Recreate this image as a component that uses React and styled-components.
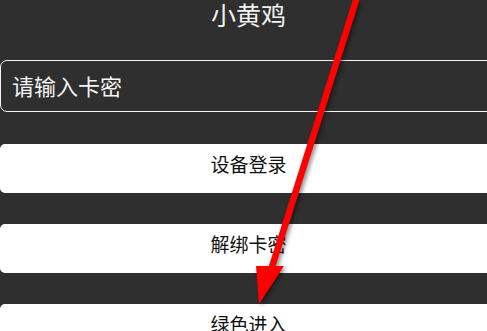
import React from "react";
import styled, { createGlobalStyle } from "styled-components";

const Global = createGlobalStyle`
  html, body {
    margin: 0;
    padding: 0;
    background: #2f2f2f;
    overflow: hidden;
  }
  body {
    font-family: "Noto Sans CJK SC", "Noto Sans", sans-serif;
  }
`;

const Page = styled.div`
  position: relative;
  width: 497px;
  height: 331px;
  overflow: hidden;
  display: flex;
  flex-direction: column;
  background: #2f2f2f;
`;

const Title = styled.div`
  flex: none;
  height: 28px;
  line-height: 28px;
  font-size: 25px;
  color: #f2f2f2;
  text-align: center;
`;

const Input = styled.input`
  flex: none;
  box-sizing: border-box;
  margin: 32px 0 0;
  height: 52px;
  width: 100%;
  border: 1px solid #f4f4f4;
  border-radius: 7px;
  background: transparent;
  color: #fff;
  font-family: "Noto Sans CJK SC", "Noto Sans", sans-serif;
  font-size: 22px;
  padding: 0 0 2px 11px;
  outline: none;
  &::placeholder {
    color: #f4f4f4;
    opacity: 1;
  }
`;

const Buttons = styled.div`
  flex: none;
  display: flex;
  flex-direction: column;
  gap: 31px;
  margin-top: 32px;
`;

const Button = styled.button`
  box-sizing: border-box;
  height: 49px;
  width: 100%;
  flex: none;
  border: none;
  border-radius: 5px;
  background: #ffffff;
  color: #111;
  font-family: "Noto Sans CJK SC", "Noto Sans", sans-serif;
  font-size: 19px;
  line-height: 22px;
  padding: 0 0 10px;
`;

const Overlay = styled.svg`
  position: absolute;
  left: 0;
  top: 0;
  width: 487px;
  height: 331px;
  pointer-events: none;
  filter: drop-shadow(2px 2px 2px rgba(0, 0, 0, 0.45));
`;

export default function App() {
  return (
    <>
      <Global />
      <Page>
        <Title>小黄鸡</Title>
        <Input placeholder="请输入卡密" />
        <Buttons>
          <Button>设备登录</Button>
          <Button>解绑卡密</Button>
          <Button>绿色进入</Button>
        </Buttons>
        <Overlay viewBox="0 0 487 331">
          <line x1="358" y1="-6" x2="271" y2="270" stroke="#ff0000" strokeWidth="6.5" />
          <polygon points="256,266 284,266 259,304" fill="#ff0000" />
        </Overlay>
      </Page>
    </>
  );
}
